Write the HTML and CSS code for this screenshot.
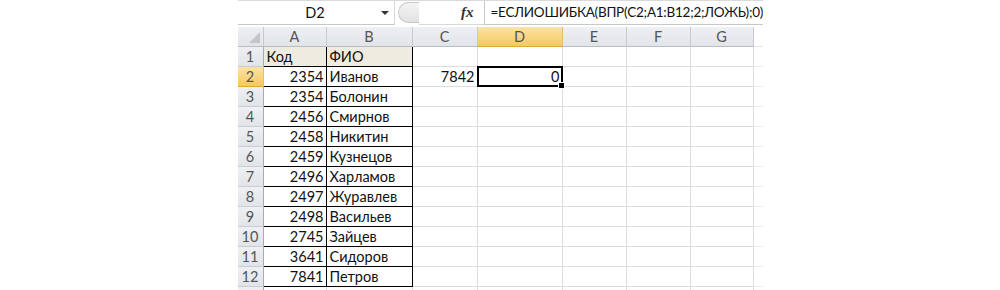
FILE: index.html
```html
<!DOCTYPE html>
<html lang="ru">
<head>
  <meta charset="UTF-8" />
  <title>ЕСЛИОШИБКА ВПР</title>
  <link rel="stylesheet" href="styles.css">
</head>
<body>

<div class="sheet">
  <!-- formula bar -->
  <div class="formula-bar">
    <div class="name-box">
      <span class="name">D2</span>
      <span class="arrow"></span>
    </div>
    <div class="knob"></div>
    <div class="fx">fx</div>
    <div class="formula">=ЕСЛИОШИБКА(ВПР(C2;A1:B12;2;ЛОЖЬ);0)</div>
  </div>

  <!-- grid -->
  <div class="grid">
    <div class="hd corner"><span class="tri"></span></div>
    <div class="hd">A</div>
    <div class="hd">B</div>
    <div class="hd">C</div>
    <div class="hd active">D</div>
    <div class="hd">E</div>
    <div class="hd">F</div>
    <div class="hd">G</div>
    <div class="hd-tail"></div>
  </div>
  <div class="grid" id="rows"></div>
</div>

<script>
  const data = [
    ["Код", "ФИО"],
    [2354, "Иванов"],
    [2354, "Болонин"],
    [2456, "Смирнов"],
    [2458, "Никитин"],
    [2459, "Кузнецов"],
    [2496, "Харламов"],
    [2497, "Журавлев"],
    [2498, "Васильев"],
    [2745, "Зайцев"],
    [3641, "Сидоров"],
    [7841, "Петров"],
    ["", ""]
  ];

  const rows = document.getElementById("rows");

  data.forEach((r, i) => {
    const n = i + 1;
    const head = n === 2 ? "rh active" : "rh";
    const inTable = n <= 12;
    const first = n === 1 ? " title-row" : "";
    const a = typeof r[0] === "number" ? "num" : "";
    let c = "", d = "";
    if (n === 2) { c = "7842"; d = "0"; }
    rows.innerHTML += `
      <div class="${head}">${inTable ? n : ""}</div>
      <div class="cell ${a}${inTable ? " tbl" : ""}${first}">${r[0]}</div>
      <div class="cell${inTable ? " tbl" : ""}${first}">${r[1]}</div>
      <div class="cell num">${c}</div>
      <div class="cell num${n === 2 ? " selected" : ""}">${d}</div>
      <div class="cell"></div>
      <div class="cell"></div>
      <div class="cell"></div>
      <div class="cell tail"></div>
    `;
  });
</script>
</body>
</html>
```

FILE: styles.css
```css
body {
  margin: 0;
  background: #fff;
  font-family: Lato, "Open Sans", sans-serif;
}

.sheet {
  width: 525px;
  margin: 0 auto;
  overflow: hidden;
  height: 290px;
}

/* formula bar */
.formula-bar {
  display: flex;
  align-items: stretch;
  height: 25px;
  border-top: 1px solid #dadada;
  box-sizing: border-box;
  margin-bottom: 2px;
}

.name-box {
  flex: 0 0 157px;
  display: flex;
  align-items: center;
  border-bottom: 1px solid #c8c8c8;
  border-right: 1px solid #d8d8d8;
  box-sizing: border-box;
}

.name {
  flex: 1;
  text-align: center;
  font-size: 14.5px;
  color: #111;
  padding-left: 12px;
}

.arrow {
  width: 0;
  height: 0;
  border-left: 4px solid transparent;
  border-right: 4px solid transparent;
  border-top: 4px solid #333;
  margin-right: 5px;
}

.knob {
  flex: 0 0 20px;
  margin: 1px 0 2px 3px;
  border-radius: 12px 0 0 12px;
  background: linear-gradient(#f4f4f4, #e2e2e2);
  border: 1px solid #c9c9c9;
  border-right: none;
}

.fx {
  flex: 0 0 65px;
  text-align: right;
  padding-right: 10px;
  box-sizing: border-box;
  font-family: "Liberation Serif", serif;
  font-style: italic;
  font-weight: bold;
  font-size: 15px;
  color: #333;
  line-height: 23px;
  border-bottom: 1px solid #d8d8d8;
}

.formula {
  flex: 1;
  min-width: 0;
  font-size: 13.5px;
  letter-spacing: -0.25px;
  color: #111;
  line-height: 23px;
  padding-left: 6px;
  border-left: 1px solid #c8c8c8;
  border-bottom: 1px solid #c8c8c8;
  white-space: nowrap;
}

/* grid */
.grid {
  display: grid;
  grid-template-columns: 26px 63px 86px 65px 85px 64px 64px 63px 9px;
  grid-auto-rows: 20px;
}

.hd, .rh {
  background: linear-gradient(#eef0f3, #e1e4e8);
  color: #555;
  font-size: 14.5px;
  text-align: center;
  line-height: 19px;
  border-right: 1px solid #c6c9cd;
  border-bottom: 1px solid #b9bdc2;
  box-sizing: border-box;
}

.hd.active, .rh.active {
  background: linear-gradient(#fbe3a4, #f6c95f);
  border-bottom-color: #e0a935;
  border-right-color: #e6bd6a;
}

.corner {
  position: relative;
}

.tri {
  position: absolute;
  right: 3px;
  bottom: 3px;
  width: 0;
  height: 0;
  border-left: 11px solid transparent;
  border-bottom: 11px solid #c2c5c9;
}

.hd-tail {
  background: #fff;
  border-bottom: 1px solid #e6e6e6;
}

.rh {
  border-bottom-color: #c9ccd0;
  border-right-color: #a8acb2;
}

.cell {
  font-size: 14.5px;
  color: #111;
  line-height: 19px;
  padding: 0 2px 0 3px;
  border-right: 1px solid #dadcdd;
  border-bottom: 1px solid #dadcdd;
  box-sizing: border-box;
  white-space: nowrap;
}

.cell.num {
  text-align: right;
}

.cell.tbl {
  border-right-color: #000;
  border-bottom-color: #000;
}

.cell.title-row {
  background: #eeece1;
}

.cell.tail {
  border-right: none;
  border-bottom-color: #eeeeee;
}

.cell.selected {
  position: relative;
}

.cell.selected::before {
  content: "";
  position: absolute;
  left: -1px;
  top: -1px;
  right: -1px;
  bottom: -1px;
  border: 2px solid #000;
}

.cell.selected::after {
  content: "";
  position: absolute;
  right: -3px;
  bottom: -3px;
  width: 5px;
  height: 5px;
  background: #000;
  border: 1px solid #fff;
}
```
